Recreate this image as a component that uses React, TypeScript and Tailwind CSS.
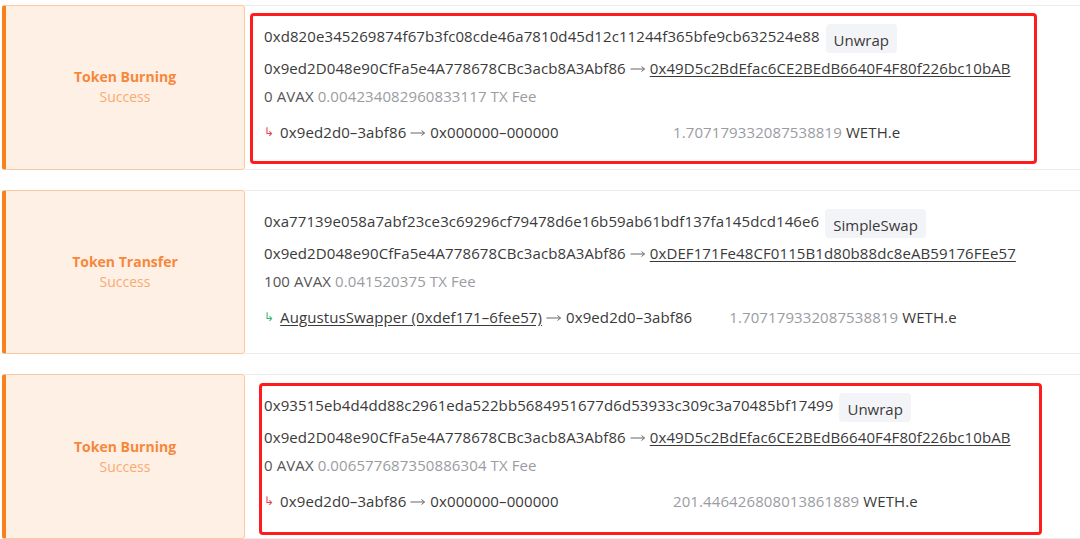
import React from 'react';

type Tx = {
    kind: string;
    hash: string;
    method: string;
    from: string;
    to: string;
    value: string;
    fee: string;
    transferFrom: string;
    transferFromLink?: boolean;
    transferTo: string;
    amount: string;
    burn: boolean;
    marked: boolean;
};

const txs: Tx[] = [
    {
        kind: 'Token Burning',
        hash: '0xd820e345269874f67b3fc08cde46a7810d45d12c11244f365bfe9cb632524e88',
        method: 'Unwrap',
        from: '0x9ed2D048e90CfFa5e4A778678CBc3acb8A3Abf86',
        to: '0x49D5c2BdEfac6CE2BEdB6640F4F80f226bc10bAB',
        value: '0 AVAX',
        fee: '0.004234082960833117',
        transferFrom: '0x9ed2d0–3abf86',
        transferTo: '0x000000–000000',
        amount: '1.707179332087538819',
        burn: true,
        marked: true,
    },
    {
        kind: 'Token Transfer',
        hash: '0xa77139e058a7abf23ce3c69296cf79478d6e16b59ab61bdf137fa145dcd146e6',
        method: 'SimpleSwap',
        from: '0x9ed2D048e90CfFa5e4A778678CBc3acb8A3Abf86',
        to: '0xDEF171Fe48CF0115B1d80b88dc8eAB59176FEe57',
        value: '100 AVAX',
        fee: '0.041520375',
        transferFrom: 'AugustusSwapper (0xdef171–6fee57)',
        transferFromLink: true,
        transferTo: '0x9ed2d0–3abf86',
        amount: '1.707179332087538819',
        burn: false,
        marked: false,
    },
    {
        kind: 'Token Burning',
        hash: '0x93515eb4d4dd88c2961eda522bb5684951677d6d53933c309c3a70485bf17499',
        method: 'Unwrap',
        from: '0x9ed2D048e90CfFa5e4A778678CBc3acb8A3Abf86',
        to: '0x49D5c2BdEfac6CE2BEdB6640F4F80f226bc10bAB',
        value: '0 AVAX',
        fee: '0.006577687350886304',
        transferFrom: '0x9ed2d0–3abf86',
        transferTo: '0x000000–000000',
        amount: '201.446426808013861889',
        burn: true,
        marked: true,
    },
];

function Arrow() {
    // thin long arrow like the explorer uses between addresses
    return (
        <svg width="16" height="8" viewBox="0 0 16 8" className="mx-[4px] mt-[2px] shrink-0 text-[#666]">
            <path d="M0.5 4H14.5M11.5 1.5L14.5 4L11.5 6.5" fill="none" stroke="currentColor" strokeWidth="1" />
        </svg>
    );
}

function TxRow({ tx, boxClass }: { tx: Tx; boxClass: string }) {
    return (
        <div className="relative flex h-[165px] w-full">
            <div className="flex w-[243px] shrink-0 flex-col items-center justify-center rounded-[3px] border border-l-[4px] border-[#fcc8a0] border-l-[#f7821b] bg-[#fff0e6] text-[14px] leading-[20px]">
                <span className="font-bold text-[#f7873a]">{tx.kind}</span>
                <span className="text-[#f9aa70]">Success</span>
            </div>
            <div className="flex flex-1 flex-col border-y border-[#ececec] pl-[19px] text-[15px] leading-[20px] tracking-[0.1px] text-[#3a3a3a]">
                <div className="mt-[18px] flex items-start">
                    <span className="mt-[2px]">{tx.hash}</span>
                    <span className="ml-[6px] rounded-[4px] bg-[#f3f4f8] px-[8px] pb-[3px] pt-[6px] tracking-normal">
                        {tx.method}
                    </span>
                </div>
                <div className="mt-[5px] flex items-center">
                    <span>{tx.from}</span>
                    <Arrow />
                    <span className="underline underline-offset-[2px]">{tx.to}</span>
                </div>
                <div className="mt-[8px] flex items-center">
                    <span className="text-[#555]">{tx.value}</span>
                    <span className="ml-[4px] text-[#9a9ca2]">{tx.fee} TX Fee</span>
                </div>
                <div className="mt-[16px] flex items-center">
                    <div className="flex min-w-[409px] items-center pr-[37px]">
                        <span className={tx.burn ? 'mr-[6px] text-[12px] text-[#e8414a]' : 'mr-[6px] text-[12px] text-[#3cb371]'}>
                            ↳
                        </span>
                        <span className={tx.transferFromLink ? 'underline underline-offset-[2px]' : ''}>
                            {tx.transferFrom}
                        </span>
                        <Arrow />
                        <span>{tx.transferTo}</span>
                    </div>
                    <span className="text-[#9a9ca2]">{tx.amount}</span>
                    <span className="ml-[4px]">WETH.e</span>
                </div>
            </div>
            {tx.marked && (
                <div className={'pointer-events-none absolute rounded-[4px] border-[3px] border-[#ff1c1c] ' + boxClass} />
            )}
        </div>
    );
}

export default function App() {
    return (
        <div
            className="flex h-[539px] w-[1080px] flex-col gap-[20px] overflow-hidden bg-white pl-[2px] pt-[5px]"
            style={{ fontFamily: '"Open Sans", "Liberation Sans", sans-serif' }}
        >
            <TxRow tx={txs[0]} boxClass="left-[248px] top-[8px] h-[151px] w-[787px]" />
            <TxRow tx={txs[1]} boxClass="" />
            <TxRow tx={txs[2]} boxClass="left-[257px] top-[9px] h-[152px] w-[783px]" />
        </div>
    );
}
